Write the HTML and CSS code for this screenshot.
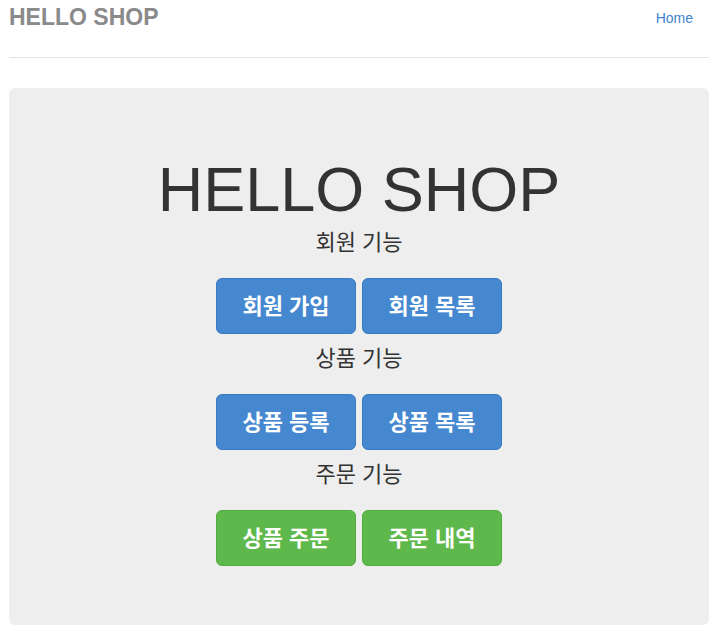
FILE: index.html
```html
<!DOCTYPE html>
<html lang="ko">
<head>
    <meta charset="UTF-8">
    <meta name="viewport" content="width=device-width, initial-scale=1.0">
    <title>HELLO SHOP</title>
    <link rel="stylesheet" href="styles.css">
</head>
<body>

<div class="container">
    <div class="header">
        <h3 class="brand">HELLO SHOP</h3>
        <ul class="nav">
            <li><a href="/">Home</a></li>
        </ul>
    </div>

    <div class="jumbotron">
        <h1>HELLO SHOP</h1>

        <div class="group">
            <p class="lead">회원 기능</p>
            <div class="actions">
                <a class="btn btn-primary" href="/members/new">회원 가입</a>
                <a class="btn btn-primary" href="/members">회원 목록</a>
            </div>
        </div>

        <div class="group">
            <p class="lead">상품 기능</p>
            <div class="actions">
                <a class="btn btn-primary" href="/items/new">상품 등록</a>
                <a class="btn btn-primary" href="/items">상품 목록</a>
            </div>
        </div>

        <div class="group">
            <p class="lead">주문 기능</p>
            <div class="actions">
                <a class="btn btn-success" href="/order">상품 주문</a>
                <a class="btn btn-success" href="/orders">주문 내역</a>
            </div>
        </div>
    </div>
</div>

</body>
</html>
```

FILE: styles.css
```css
body {
    font-family: "Liberation Sans", "Noto Sans CJK KR", sans-serif;
    font-size: 14px;
    line-height: 1.42857;
    color: #333;
    background-color: #fff;
    margin: 0;
}
.container {
    padding: 0 8px 0 9px;
}
.header {
    display: flex;
    justify-content: space-between;
    align-items: flex-start;
    box-sizing: border-box;
    height: 58px;
    border-bottom: 1px solid #e5e5e5;
}
.brand {
    margin: 5px 0 0;
    font-size: 23px;
    font-weight: bold;
    line-height: 1.1;
    color: #8a8a8a;
}
.nav {
    list-style: none;
    margin: 0;
    padding: 0;
}
.nav a {
    display: block;
    padding: 8px 16px 8px 15px;
    line-height: 20px;
    color: #3f85cf;
    text-decoration: none;
}
.jumbotron {
    margin-top: 30px;
    padding: 48px 0 59px;
    background-color: #eee;
    border-radius: 6px;
    text-align: center;
}
.jumbotron h1 {
    margin: 19px 0 4px;
    font-size: 63px;
    font-weight: 500;
    line-height: 1.1;
    color: #333;
}
.group + .group {
    margin-top: 10px;
}
.lead {
    margin: 0 0 20px;
    font-size: 22px;
    line-height: 30px;
}
.actions {
    display: flex;
    justify-content: center;
    gap: 6px;
}
.btn {
    display: flex;
    align-items: center;
    justify-content: center;
    box-sizing: border-box;
    width: 140px;
    height: 56px;
    border: 1px solid transparent;
    border-radius: 6px;
    font-size: 22px;
    font-weight: bold;
    color: #fff;
    text-decoration: none;
}
.btn-primary {
    background-color: #4688cf;
    border-color: #3a7bc2;
}
.btn-success {
    background-color: #5fb84c;
    border-color: #52ad40;
}
```
